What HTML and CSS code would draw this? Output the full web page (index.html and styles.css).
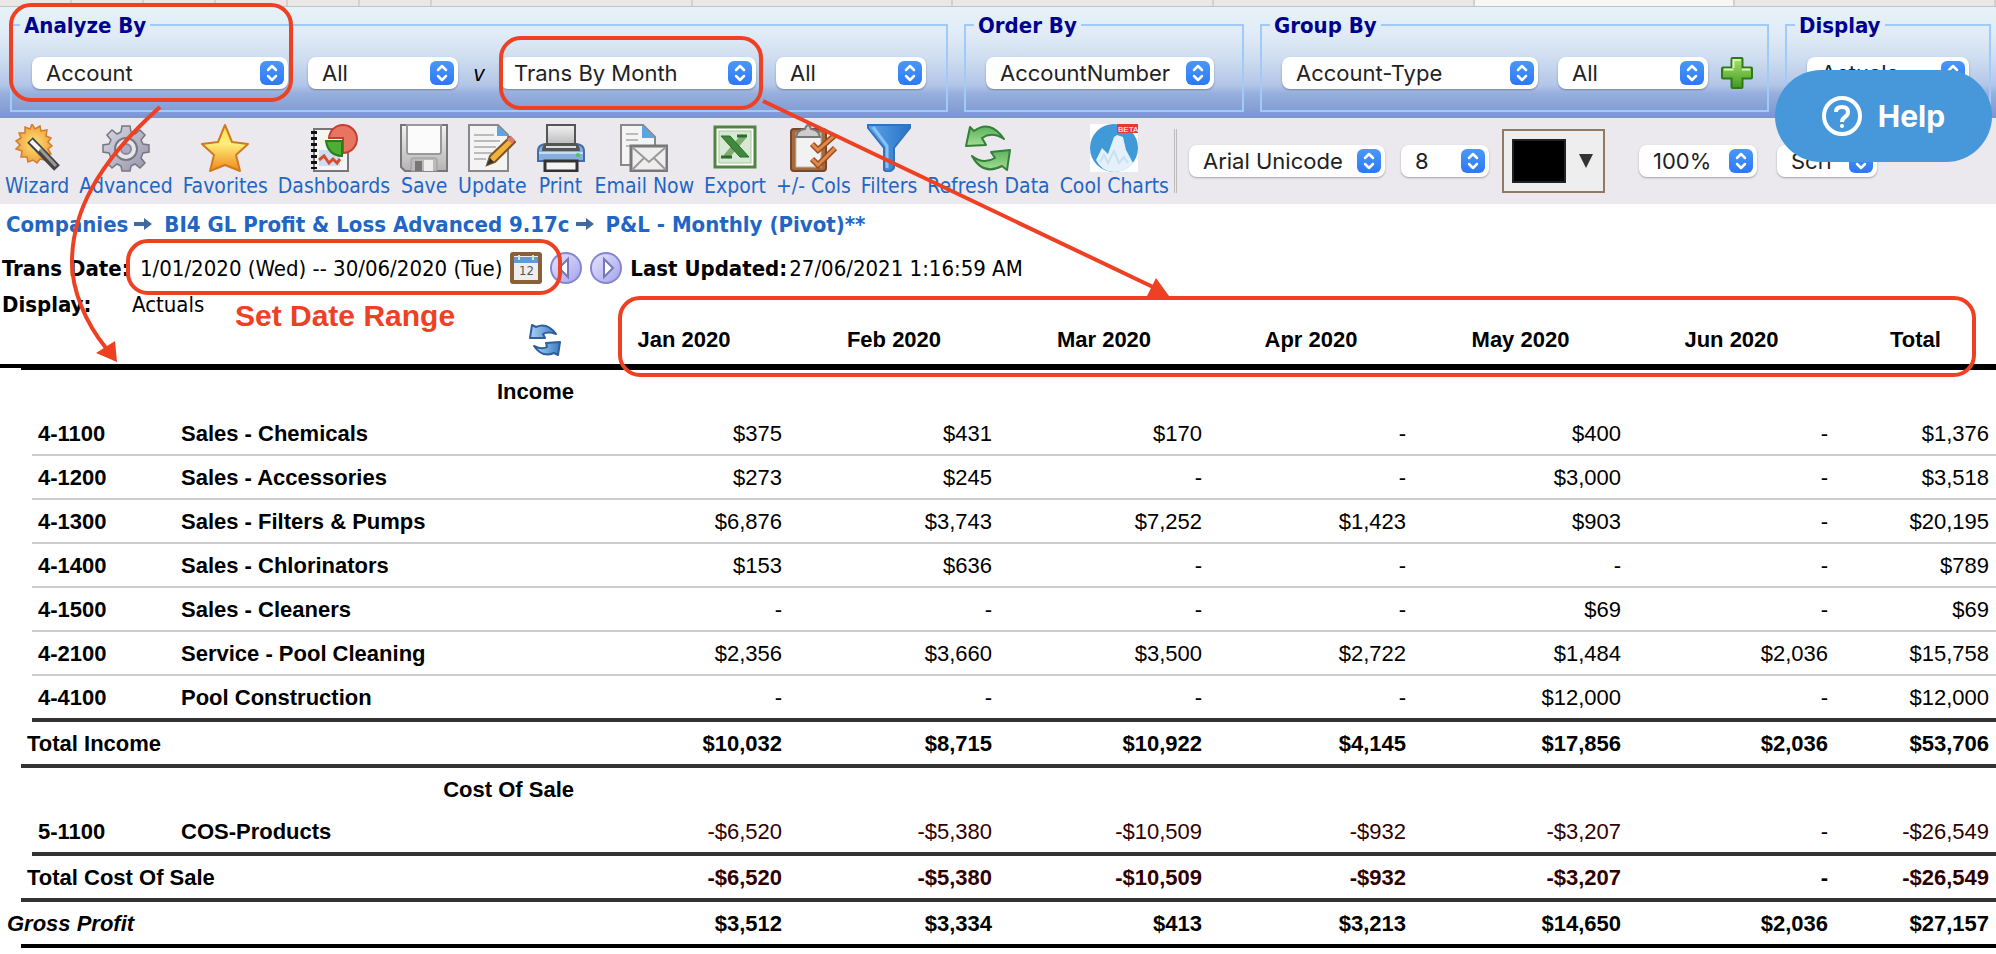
FILE: index.html
```
<!DOCTYPE html>
<html lang="en">
<head>
    <meta charset="UTF-8">
    <meta name="viewport" content="width=device-width, initial-scale=1.0">
    <title>P&amp;L - Monthly (Pivot)</title>
    <link rel="stylesheet" href="styles.css">
</head>
<body>
    <div class="tab-strip">
        <span></span><span></span><span></span><span></span><span></span><span></span>
        <span class="wide"></span><span class="wide"></span><span class="wide"></span><span class="wide"></span><span class="wide active"></span><span class="wide"></span>
    </div>

    <form class="criteria">
        <fieldset class="analyze">
            <legend>Analyze By</legend>
            <select class="w-large" aria-label="Analyze by"><option>Account</option></select>
            <select class="w-medium" aria-label="Account filter"><option>All</option></select>
            <span class="versus">v</span>
            <select class="w-large" aria-label="Versus"><option>Trans By Month</option></select>
            <select class="w-medium" aria-label="Month filter"><option>All</option></select>
        </fieldset>
        <fieldset class="order">
            <legend>Order By</legend>
            <select class="w-order" aria-label="Order by"><option>AccountNumber</option></select>
        </fieldset>
        <fieldset class="group">
            <legend>Group By</legend>
            <select class="w-large" aria-label="Group by"><option>Account-Type</option></select>
            <select class="w-medium" aria-label="Group filter"><option>All</option></select>
            <button type="button" class="icon-btn add-btn" aria-label="Add group">
                <svg width="32" height="32" viewBox="0 0 32 32">
                    <path d="M11.500 1h9q1 0 1 1v8.500h8.500q1 0 1 1v9q0 1-1 1h-8.500v8.500q0 1-1 1h-9q-1 0-1-1v-8.500h-8.500q-1 0-1-1v-9q0-1 1-1h8.500v-8.500q0-1 1-1z" fill="url(#plusFill)" stroke="#2f7a18" stroke-width="2"/>
                    <path d="M12.500 11V3h7M3 12.500h9.500M21 12.500h8" fill="none" stroke="#d9f5b5" stroke-width="2"/>
                </svg>
            </button>
        </fieldset>
        <fieldset class="display">
            <legend>Display</legend>
            <select class="w-display" aria-label="Display"><option>Actuals</option></select>
        </fieldset>
    </form>

    <div class="toolbar">
        <button type="button" class="tool">
            <svg width="48" height="48" viewBox="0 0 48 48">
                <path d="M19 0l3 5 5-3 1 5 6-1-1 6 5 2-3 4 4 4-4 3 3 5-6 1 0 5-5-1-3 4-4-3-5 2-1-5-6 0 1-6-6-2 4-4-4-4 5-3-2-5 6 0 0-6 5 2z" fill="url(#wizFill)" stroke="#cf7f2d" stroke-width="1.500"/>
                <path d="M17 16l27 28" stroke="#444" stroke-width="8" stroke-linecap="butt"/>
                <path d="M18 17l9 9" stroke="#f4f4f4" stroke-width="4"/>
                <path d="M27 25l16 17" stroke="#999" stroke-width="3"/>
            </svg>
            <span>Wizard</span>
        </button>
        <button type="button" class="tool">
            <svg width="48" height="48" viewBox="0 0 48 48">
                <path d="M20 2h8l1 6 4 2 5-4 5 5-4 5 2 4 6 1v7l-6 1-2 5 4 5-5 5-5-4-4 2-1 5h-8l-1-5-4-2-5 4-5-5 4-5-2-5-6-1v-7l6-1 2-4-4-5 5-5 5 4 4-2z" fill="url(#steel)" stroke="#77777f" stroke-width="1.500"/>
                <circle cx="24" cy="25" r="11" fill="#e6e6ea" stroke="#77777f" stroke-width="2"/>
                <circle cx="24" cy="25" r="5" fill="#aaaac9" stroke="#8a8a99" stroke-width="2"/>
            </svg>
            <span>Advanced</span>
        </button>
        <button type="button" class="tool">
            <svg width="48" height="48" viewBox="0 0 48 48">
                <path d="M24 1l7 17 16 2-12 11 4 16-15-6-15 6 4-16L1 20l16-2z" fill="url(#starFill)" stroke="#d07a20" stroke-width="2" stroke-linejoin="round"/>
            </svg>
            <span>Favorites</span>
        </button>
        <button type="button" class="tool">
            <svg width="48" height="48" viewBox="0 0 48 48">
                <rect x="4" y="5" width="34" height="42" fill="#f5f5f5" stroke="#777" stroke-width="2"/>
                <path d="M4 7v38" stroke="#111" stroke-width="6" stroke-dasharray="3 3"/>
                <path d="M9 26h21v16H9z" fill="#cfdcf5"/>
                <path d="M9 36l5-4 5 7 4-4 4 4 3-4" fill="none" stroke="#d4502c" stroke-width="3"/>
                <path d="M19 14a14 14 0 1 1 14 15V14z" fill="#e87562" stroke="#c63e30" stroke-width="2"/>
                <path d="M16 17h16v15Q18 31 16 17z" fill="#4cae33" stroke="#2c7d1c" stroke-width="2"/>
            </svg>
            <span>Dashboards</span>
        </button>
        <button type="button" class="tool">
            <svg width="48" height="48" viewBox="0 0 48 48">
                <path d="M1 1h46v46H5l-4-4z" fill="url(#metal)" stroke="#777" stroke-width="2"/>
                <path d="M7 1h34v27q0 2-2 2H9q-2 0-2-2z" fill="#fbfbfb" stroke="#999" stroke-width="2"/>
                <path d="M11 47V36q0-2 2-2h22q2 0 2 2v11z" fill="#bbb" stroke="#999"/>
                <path d="M15 37h7v10h-7z" fill="#777"/>
                <path d="M24 36h9v11h-9z" fill="#eee"/>
            </svg>
            <span>Save</span>
        </button>
        <button type="button" class="tool">
            <svg width="48" height="48" viewBox="0 0 48 48">
                <path d="M1 1h29l10 10v36H1z" fill="#f4f4f4" stroke="#888" stroke-width="2"/>
                <path d="M29 1l11 11H29z" fill="#5aa5e4"/>
                <path d="M6 11h20M6 17h26M6 23h22M6 29h18M6 35h12" stroke="#bbb" stroke-width="2"/>
                <path d="M19 41l3-9 20-19 5 5-20 20z" fill="#f1b13a" stroke="#7a5626" stroke-width="2"/>
                <path d="M39 15l4-3 4 4-3 4z" fill="#dc7a6b"/>
                <path d="M19 41l3-7 4 4z" fill="#333"/>
            </svg>
            <span>Update</span>
        </button>
        <button type="button" class="tool">
            <svg width="48" height="48" viewBox="0 0 48 48">
                <path d="M10 1h28v22H10z" fill="url(#metal)" stroke="#555" stroke-width="2"/>
                <path d="M8 20h32q7 1 7 7v10H1V27q0-6 7-7z" fill="#86afe0" stroke="#446da8" stroke-width="2"/>
                <path d="M5 27q0-7 5-8h28q5 1 5 8z" fill="#555"/>
                <path d="M9 23h30" stroke="#ddd" stroke-width="2"/>
                <path d="M2 29h44" stroke="#c6dcf6" stroke-width="2"/>
                <circle cx="41" cy="31" r="2" fill="#47c94a"/>
                <path d="M8 37h32v10H8z" fill="#f4f4f4" stroke="#333" stroke-width="3"/>
            </svg>
            <span>Print</span>
        </button>
        <button type="button" class="tool">
            <svg width="48" height="48" viewBox="0 0 48 48">
                <path d="M1 1h22l12 12v28H1z" fill="#f4f4f4" stroke="#888" stroke-width="2"/>
                <path d="M22 1l13 13H22z" fill="#5aa5e4"/>
                <path d="M6 10h12M6 16h12M6 22h8" stroke="#bbb" stroke-width="2"/>
                <rect x="11" y="22" width="36" height="25" fill="#eee" stroke="#777" stroke-width="3"/>
                <path d="M12 23l17 15 17-15M12 46l12-12M46 46L34 34" fill="none" stroke="#999" stroke-width="2"/>
            </svg>
            <span>Email Now</span>
        </button>
        <button type="button" class="tool">
            <svg width="48" height="48" viewBox="0 0 48 48">
                <rect x="4" y="3" width="40" height="40" fill="#fff" stroke="#4f8540" stroke-width="3"/>
                <rect x="8" y="7" width="32" height="32" fill="#d7e8d4" stroke="#a8c79e"/>
                <path d="M33 12L15 33" stroke="#7fae6c" stroke-width="6"/>
                <path d="M10 12h9l19 21h-9z" fill="#3f8a3a" stroke="#2c6b2b"/>
                <path d="M26 12h10M10 33h11" stroke="#2c6b2b" stroke-width="3"/>
            </svg>
            <span>Export</span>
        </button>
        <button type="button" class="tool">
            <svg width="48" height="48" viewBox="0 0 48 48">
                <rect x="2" y="5" width="35" height="42" rx="3" fill="#a76a3c" stroke="#76472a" stroke-width="2"/>
                <rect x="7" y="9" width="25" height="34" fill="#f2f2f2" stroke="#bbb"/>
                <path d="M7 13q1-7 9-8 3-8 6 0 8 1 9 8z" fill="#ccc" stroke="#777" stroke-width="2"/>
                <path d="M23 20l6 6L46 11M23 35l6 6 17-17" fill="none" stroke="#9c4d20" stroke-width="6"/>
                <path d="M23 20l6 6L46 11M23 35l6 6 17-17" fill="none" stroke="#e08a4c" stroke-width="3"/>
            </svg>
            <span>+/- Cols</span>
        </button>
        <button type="button" class="tool">
            <svg width="48" height="48" viewBox="0 0 48 48">
                <path d="M3 1h42v3L29 24v20q-5 6-10 2V24L3 4z" fill="url(#funnel)" stroke="#3273bd" stroke-width="2"/>
                <path d="M8 3l14 19v22" fill="none" stroke="#8ac2f5" stroke-width="3"/>
            </svg>
            <span>Filters</span>
        </button>
        <button type="button" class="tool">
            <svg width="48" height="48" viewBox="0 0 48 48">
                <path d="M2 22L6 3l4 4Q26-5 40 15 28 7 18 14l4 7z" fill="url(#leaf)" stroke="#34803a" stroke-width="2" stroke-linejoin="round"/>
                <path d="M46 26l-3 20-5-4Q19 52 8 32q11 9 23 2l-4-6z" fill="url(#leaf)" stroke="#34803a" stroke-width="2" stroke-linejoin="round"/>
            </svg>
            <span>Refresh Data</span>
        </button>
        <button type="button" class="tool">
            <svg width="48" height="48" viewBox="0 0 48 48">
                <rect width="48" height="48" fill="#fff"/>
                <circle cx="24" cy="24" r="24" fill="#409ad8"/>
                <path d="M6 36l6-12 6 6 6-17 3-2 6 2 3 13 7 13Q36 48 24 48T6 36z" fill="#e4f1fa"/>
                <path d="M10 38l4-7 4 8 6-12 5 12 5-6 4 6" fill="none" stroke="#c7e1f3" stroke-width="2"/>
                <path d="M27 0h21v9H27z" fill="#e23b36"/>
                <text x="28" y="8" font-size="8" fill="#fff">BETA</text>
            </svg>
            <span>Cool Charts</span>
        </button>

        <div class="format">
            <select class="w-font" aria-label="Font"><option>Arial Unicode</option></select>
            <select class="w-size" aria-label="Font size"><option>8</option></select>
            <button type="button" class="color-picker" aria-label="Font colour">
                <span class="swatch"></span>
                <svg width="16" height="14" viewBox="0 0 16 14"><path d="M1 0h14L8 14z" fill="#333"/></svg>
            </button>
            <select class="w-zoom" aria-label="Zoom"><option>100%</option></select>
            <select class="w-mode" aria-label="Output"><option>Scri</option></select>
        </div>
    </div>

    <nav class="breadcrumb">
        <a href="#">Companies</a>
        <svg width="18" height="12" viewBox="0 0 18 12"><path d="M0 4h10V0l8 6-8 6V8H0z" fill="#41699f"/></svg>
        <a href="#">BI4 GL Profit &amp; Loss Advanced 9.17c</a>
        <svg width="18" height="12" viewBox="0 0 18 12"><path d="M0 4h10V0l8 6-8 6V8H0z" fill="#41699f"/></svg>
        <a href="#">P&amp;L - Monthly (Pivot)**</a>
    </nav>

    <div class="info date-row">
        <b class="label">Trans Date:</b>
        <span class="date-value">1/01/2020 (Wed) -- 30/06/2020 (Tue)</span>
        <button type="button" class="icon-btn" aria-label="Pick dates">
            <svg width="32" height="32" viewBox="0 0 32 32">
                <rect width="32" height="32" rx="3" fill="#8b5f38"/>
                <rect x="4" y="4" width="24" height="24" fill="#eee"/>
                <path d="M4 5h24v6H4z" fill="#5d9cd6"/>
                <path d="M9 3v5M23 3v5" stroke="#ddd" stroke-width="2"/>
                <text x="9" y="23" font-size="13" fill="#555">12</text>
            </svg>
        </button>
        <button type="button" class="icon-btn" aria-label="Previous period">
            <svg width="32" height="32" viewBox="0 0 32 32">
                <circle cx="16" cy="16" r="15" fill="url(#orb)" stroke="#8585d2" stroke-width="2"/>
                <path d="M18 7v18l-9-9z" fill="#fff" stroke="#7777b5" stroke-width="2"/>
            </svg>
        </button>
        <button type="button" class="icon-btn" aria-label="Next period">
            <svg width="32" height="32" viewBox="0 0 32 32">
                <circle cx="16" cy="16" r="15" fill="url(#orb)" stroke="#8585d2" stroke-width="2"/>
                <path d="M14 7v18l9-9z" fill="#fff" stroke="#7777b5" stroke-width="2"/>
            </svg>
        </button>
        <span class="updated"><b>Last Updated:</b><span>27/06/2021 1:16:59 AM</span></span>
    </div>
    <div class="info display-row">
        <b class="label">Display:</b>
        <span>Actuals</span>
    </div>

    <table class="report">
        <colgroup>
            <col class="c-edge"><col class="c-indent"><col class="c-code"><col class="c-name">
            <col class="c-month"><col class="c-month"><col class="c-month"><col class="c-apr"><col class="c-may"><col class="c-jun"><col class="c-total">
        </colgroup>
        <thead>
            <tr>
                <th colspan="4" class="reload">
                    <button type="button" class="icon-btn" aria-label="Reload">
                        <svg width="32" height="32" viewBox="0 0 32 32">
                            <path d="M1 14L3 1l4 2q11-5 20 7-8-3-13 0l2 4z" fill="url(#azure)" stroke="#2f5f9f" stroke-width="2" stroke-linejoin="round"/>
                            <path d="M31 18l-2 13-4-2Q13 34 5 22q8 4 13 1l-1-4z" fill="url(#azure)" stroke="#2f5f9f" stroke-width="2" stroke-linejoin="round"/>
                        </svg>
                    </button>
                </th>
                <th>Jan 2020</th><th>Feb 2020</th><th>Mar 2020</th><th>Apr 2020</th><th>May 2020</th><th>Jun 2020</th><th>Total</th>
            </tr>
        </thead>
        <tbody>
            <tr class="section first"><td class="edge"></td><th colspan="3">Income</th><td colspan="7"></td></tr>
            <tr class="item"><td class="edge" colspan="2"></td><th>4-1100</th><th>Sales - Chemicals</th><td>$375</td><td>$431</td><td>$170</td><td>-</td><td>$400</td><td>-</td><td>$1,376</td></tr>
            <tr class="item"><td class="edge" colspan="2"></td><th>4-1200</th><th>Sales - Accessories</th><td>$273</td><td>$245</td><td>-</td><td>-</td><td>$3,000</td><td>-</td><td>$3,518</td></tr>
            <tr class="item"><td class="edge" colspan="2"></td><th>4-1300</th><th>Sales - Filters &amp; Pumps</th><td>$6,876</td><td>$3,743</td><td>$7,252</td><td>$1,423</td><td>$903</td><td>-</td><td>$20,195</td></tr>
            <tr class="item"><td class="edge" colspan="2"></td><th>4-1400</th><th>Sales - Chlorinators</th><td>$153</td><td>$636</td><td>-</td><td>-</td><td>-</td><td>-</td><td>$789</td></tr>
            <tr class="item"><td class="edge" colspan="2"></td><th>4-1500</th><th>Sales - Cleaners</th><td>-</td><td>-</td><td>-</td><td>-</td><td>$69</td><td>-</td><td>$69</td></tr>
            <tr class="item"><td class="edge" colspan="2"></td><th>4-2100</th><th>Service - Pool Cleaning</th><td>$2,356</td><td>$3,660</td><td>$3,500</td><td>$2,722</td><td>$1,484</td><td>$2,036</td><td>$15,758</td></tr>
            <tr class="item last"><td class="edge" colspan="2"></td><th>4-4100</th><th>Pool Construction</th><td>-</td><td>-</td><td>-</td><td>-</td><td>$12,000</td><td>-</td><td>$12,000</td></tr>
            <tr class="total"><td class="edge"></td><th colspan="3">Total Income</th><td>$10,032</td><td>$8,715</td><td>$10,922</td><td>$4,145</td><td>$17,856</td><td>$2,036</td><td>$53,706</td></tr>
            <tr class="section"><td class="edge"></td><th colspan="3">Cost Of Sale</th><td colspan="7"></td></tr>
            <tr class="item last negative"><td class="edge" colspan="2"></td><th>5-1100</th><th>COS-Products</th><td>-$6,520</td><td>-$5,380</td><td>-$10,509</td><td>-$932</td><td>-$3,207</td><td>-</td><td>-$26,549</td></tr>
            <tr class="total negative"><td class="edge"></td><th colspan="3">Total Cost Of Sale</th><td>-$6,520</td><td>-$5,380</td><td>-$10,509</td><td>-$932</td><td>-$3,207</td><td>-</td><td>-$26,549</td></tr>
            <tr class="total gross"><td class="edge"><span>Gross Profit</span></td><th colspan="3"></th><td>$3,512</td><td>$3,334</td><td>$413</td><td>$3,213</td><td>$14,650</td><td>$2,036</td><td>$27,157</td></tr>
        </tbody>
    </table>

    <!-- guide marks drawn over the report -->
    <svg class="marks" width="1996" height="948" viewBox="0 0 1996 948">
        <defs>
            <linearGradient id="plusFill" x1="0" y1="0" x2="0" y2="1"><stop offset="0" stop-color="#a8e36c"/><stop offset="1" stop-color="#3f9a22"/></linearGradient>
            <radialGradient id="wizFill"><stop offset="0" stop-color="#ffe27a"/><stop offset="1" stop-color="#f0a33c"/></radialGradient>
            <linearGradient id="steel" x1="0" y1="0" x2="1" y2="1"><stop offset="0" stop-color="#d8d8e4"/><stop offset="1" stop-color="#9595ac"/></linearGradient>
            <linearGradient id="starFill" x1="0" y1="0" x2="0" y2="1"><stop offset="0" stop-color="#ffd94a"/><stop offset=".4" stop-color="#fff07a"/><stop offset="1" stop-color="#f0861c"/></linearGradient>
            <linearGradient id="metal" x1="0" y1="0" x2="0" y2="1"><stop offset="0" stop-color="#f2f2f2"/><stop offset="1" stop-color="#b4b4b4"/></linearGradient>
            <linearGradient id="funnel"><stop offset="0" stop-color="#5ba4ea"/><stop offset="1" stop-color="#2873c6"/></linearGradient>
            <linearGradient id="leaf" x1="0" y1="0" x2="0" y2="1"><stop offset="0" stop-color="#5cb25c"/><stop offset="1" stop-color="#a5dd95"/></linearGradient>
            <linearGradient id="azure"><stop offset="0" stop-color="#a9d2f5"/><stop offset="1" stop-color="#3e7cc4"/></linearGradient>
            <linearGradient id="orb" x1="0" y1="0" x2="1" y2="1"><stop offset="0" stop-color="#e6e6ff"/><stop offset="1" stop-color="#a3a3ec"/></linearGradient>
        </defs>
        <g fill="none" stroke="#ee4023" stroke-width="4">
            <rect x="11" y="5" width="280" height="95" rx="20"/>
            <rect x="501" y="38" width="260" height="70" rx="20"/>
            <rect x="128" y="241" width="432" height="52" rx="20"/>
            <rect x="620" y="298" width="1354" height="77" rx="20"/>
            <path d="M160 107C95 165 72 215 72 262C72 290 85 322 106 348"/>
            <path d="M763 101L1153 287"/>
        </g>
        <path d="M96 353L115 341L117 362zM1147 296L1156 278L1169 296z" fill="#ee4023"/>
    </svg>
    <div class="mark-text">Set Date Range</div>

    <button type="button" class="help">
        <svg width="40" height="40" viewBox="0 0 40 40" fill="none" stroke="#fff" stroke-width="4">
            <circle cx="20" cy="20" r="18"/>
            <path d="M14 16q0-5 6-5t6 5q0 3-3 5t-3 5"/>
            <circle cx="20" cy="30" r="2" fill="#fff" stroke="none"/>
        </svg>
        <span>Help</span>
    </button>
</body>
</html>
```
FILE: styles.css
```
body {
    margin: 0;
    position: relative;
    background: #fff;
    color: #000;
    font-family: "DejaVu Sans Condensed", "DejaVu Sans", sans-serif;
    font-size: 22px;
}
button {
    font: inherit;
    cursor: pointer;
}
/* browser tabs */
.tab-strip {
    display: flex;
    height: 6px;
    background: #ebe7e6;
    border-bottom: 1px solid #bcc6ca;
}
.tab-strip span {
    width: 72px;
    box-sizing: border-box;
    border-right: 2px solid #d5d1d1;
}
.tab-strip .wide {
    flex: 1;
}
.tab-strip .active {
    background: #f8f5f5;
}
/* criteria bar */
.criteria {
    display: flex;
    gap: 16px;
    height: 101px;
    padding: 4px 5px 6px 10px;
    background: linear-gradient(#e6f2f7 0, #e0ebf6 25%, #cfdef0 45%, #b3c6e8 70%, #97afde 78%, #7b95cf 100%);
}
fieldset {
    display: flex;
    align-items: center;
    gap: 20px;
    box-sizing: border-box;
    min-width: 0;
    height: 101px;
    margin: 0;
    padding: 0 20px 3px 20px;
    border: 2px solid #a0caf8;
}
legend {
    margin-left: -12px;
    padding: 2px 4px 0;
    line-height: 26px;
    font-weight: bold;
    color: #00008f;
}
.order {
    padding-right: 28px;
}
.group {
    padding-right: 14px;
}
.display {
    flex: 1;
    padding-right: 0;
}
.versus {
    width: 42px;
    margin: 0 -20px;
    text-align: center;
    font-style: italic;
}
select {
    flex: none;
    appearance: none;
    box-sizing: border-box;
    height: 32px;
    padding: 0 30px 0 14px;
    border: none;
    border-radius: 8px;
    background: #fff url("data:image/svg+xml,%3Csvg xmlns='http://www.w3.org/2000/svg' width='24' height='24'%3E%3ClinearGradient id='a' x2='0' y2='1'%3E%3Cstop stop-color='%234a98f8'/%3E%3Cstop offset='1' stop-color='%232c78f6'/%3E%3C/linearGradient%3E%3Crect width='24' height='24' rx='6' fill='url(%23a)'/%3E%3Cpath d='M8 9l4-4 4 4M8 15l4 4 4-4' fill='none' stroke='%23fff' stroke-width='2.500' stroke-linecap='round' stroke-linejoin='round'/%3E%3C/svg%3E") no-repeat right 4px center;
    box-shadow: 0 1px 2px rgba(0, 0, 0, 0.3);
    color: #222;
    font-family: Inter, sans-serif;
    font-size: 22px;
}
.w-large { width: 256px; }
.w-medium { width: 150px; }
.w-order { width: 228px; }
.w-display { width: 162px; }
.w-font { width: 196px; }
.w-size { width: 88px; }
.w-zoom { width: 118px; }
.w-mode { width: 100px; }
.icon-btn {
    display: block;
    width: 32px;
    height: 32px;
    padding: 0;
    border: none;
    background: none;
}
.icon-btn svg {
    display: block;
}
.add-btn {
    margin-left: -7px;
}
/* toolbar */
.toolbar {
    display: flex;
    height: 86px;
    background: #ebe8ee;
}
.tool {
    flex: none;
    display: flex;
    flex-direction: column;
    align-items: center;
    padding: 6px 5px 0;
    border: none;
    background: none;
    color: #2166c5;
    font-size: 21px;
    line-height: 28px;
    white-space: nowrap;
}
.tool svg {
    font-family: "Liberation Sans", sans-serif;
}
.format {
    display: flex;
    align-items: center;
    align-self: center;
    height: 64px;
    padding-left: 12px;
    border-left: 3px double #bbb;
    gap: 16px;
}
.color-picker {
    display: flex;
    align-items: center;
    gap: 12px;
    box-sizing: border-box;
    width: 103px;
    height: 64px;
    margin: 0 18px 0 -3px;
    padding: 0 8px;
    border: 2px solid #907a64;
    background: #eee;
}
.swatch {
    box-sizing: border-box;
    width: 54px;
    height: 44px;
    border: 2px solid #222;
    background: #000;
}
.w-mode {
    margin-left: 4px;
}
/* report heading */
.breadcrumb {
    display: flex;
    align-items: center;
    gap: 6px;
    height: 40px;
    padding-left: 6px;
    font-weight: bold;
}
.breadcrumb a {
    color: #2166c5;
    text-decoration: none;
}
.breadcrumb svg {
    margin-right: 6px;
}
.info {
    display: flex;
    align-items: center;
    padding-left: 2px;
    white-space: nowrap;
}
.label {
    width: 130px;
}
.date-row {
    height: 48px;
    gap: 8px;
}
.updated {
    display: flex;
    gap: 2px;
}
.display-row {
    height: 24px;
}
/* report table */
.report {
    width: 100%;
    table-layout: fixed;
    border-collapse: separate;
    border-spacing: 0;
    font-family: "Liberation Sans", sans-serif;
    font-size: 22px;
}
.c-edge { width: 21px; }
.c-indent { width: 11px; }
.c-code { width: 143px; }
.c-name { width: 404px; }
.c-month { width: 210px; }
.c-apr { width: 204px; }
.c-may { width: 215px; }
.c-jun { width: 207px; }
.c-total { width: 161px; }
.report th,
.report td {
    padding: 2px 7px 0;
    line-height: 40px;
    text-align: right;
    white-space: nowrap;
}
.report thead th {
    padding: 0;
    line-height: 48px;
    text-align: center;
    border-bottom: 4px solid #000;
}
.reload .icon-btn {
    margin-left: 529px;
}
.report tbody th {
    padding-left: 6px;
    text-align: left;
}
.report .section th {
    padding-right: 5px;
    text-align: right;
}
.report .first th,
.report .first td {
    border-top: 2px solid #000;
}
.item th,
.item td {
    border-bottom: 2px solid #ccc;
}
.last th,
.last td,
.total th,
.total td {
    border-bottom: 4px solid #333;
}
.total td {
    font-weight: bold;
}
.negative td {
    color: #300000;
}
.negative td:nth-last-child(2) {
    color: #000;
}
.gross th,
.gross td {
    border-bottom-color: #000;
}
.report tbody .edge {
    border-color: transparent;
    padding-right: 0;
    text-align: left;
}
.gross .edge {
    font-style: italic;
}
/* overlays */
.marks {
    position: absolute;
    top: 0;
    left: 0;
    pointer-events: none;
}
.mark-text {
    position: absolute;
    top: 298px;
    left: 235px;
    line-height: 36px;
    font-family: "Liberation Sans", sans-serif;
    font-size: 30px;
    font-weight: bold;
    color: #ee4023;
}
.help {
    position: absolute;
    top: 70px;
    right: 4px;
    display: flex;
    align-items: center;
    justify-content: center;
    gap: 16px;
    width: 217px;
    height: 92px;
    border: none;
    border-radius: 46px;
    background: #4698db;
    color: #fff;
    font-family: Inter, sans-serif;
    font-size: 30px;
    font-weight: bold;
}
```
